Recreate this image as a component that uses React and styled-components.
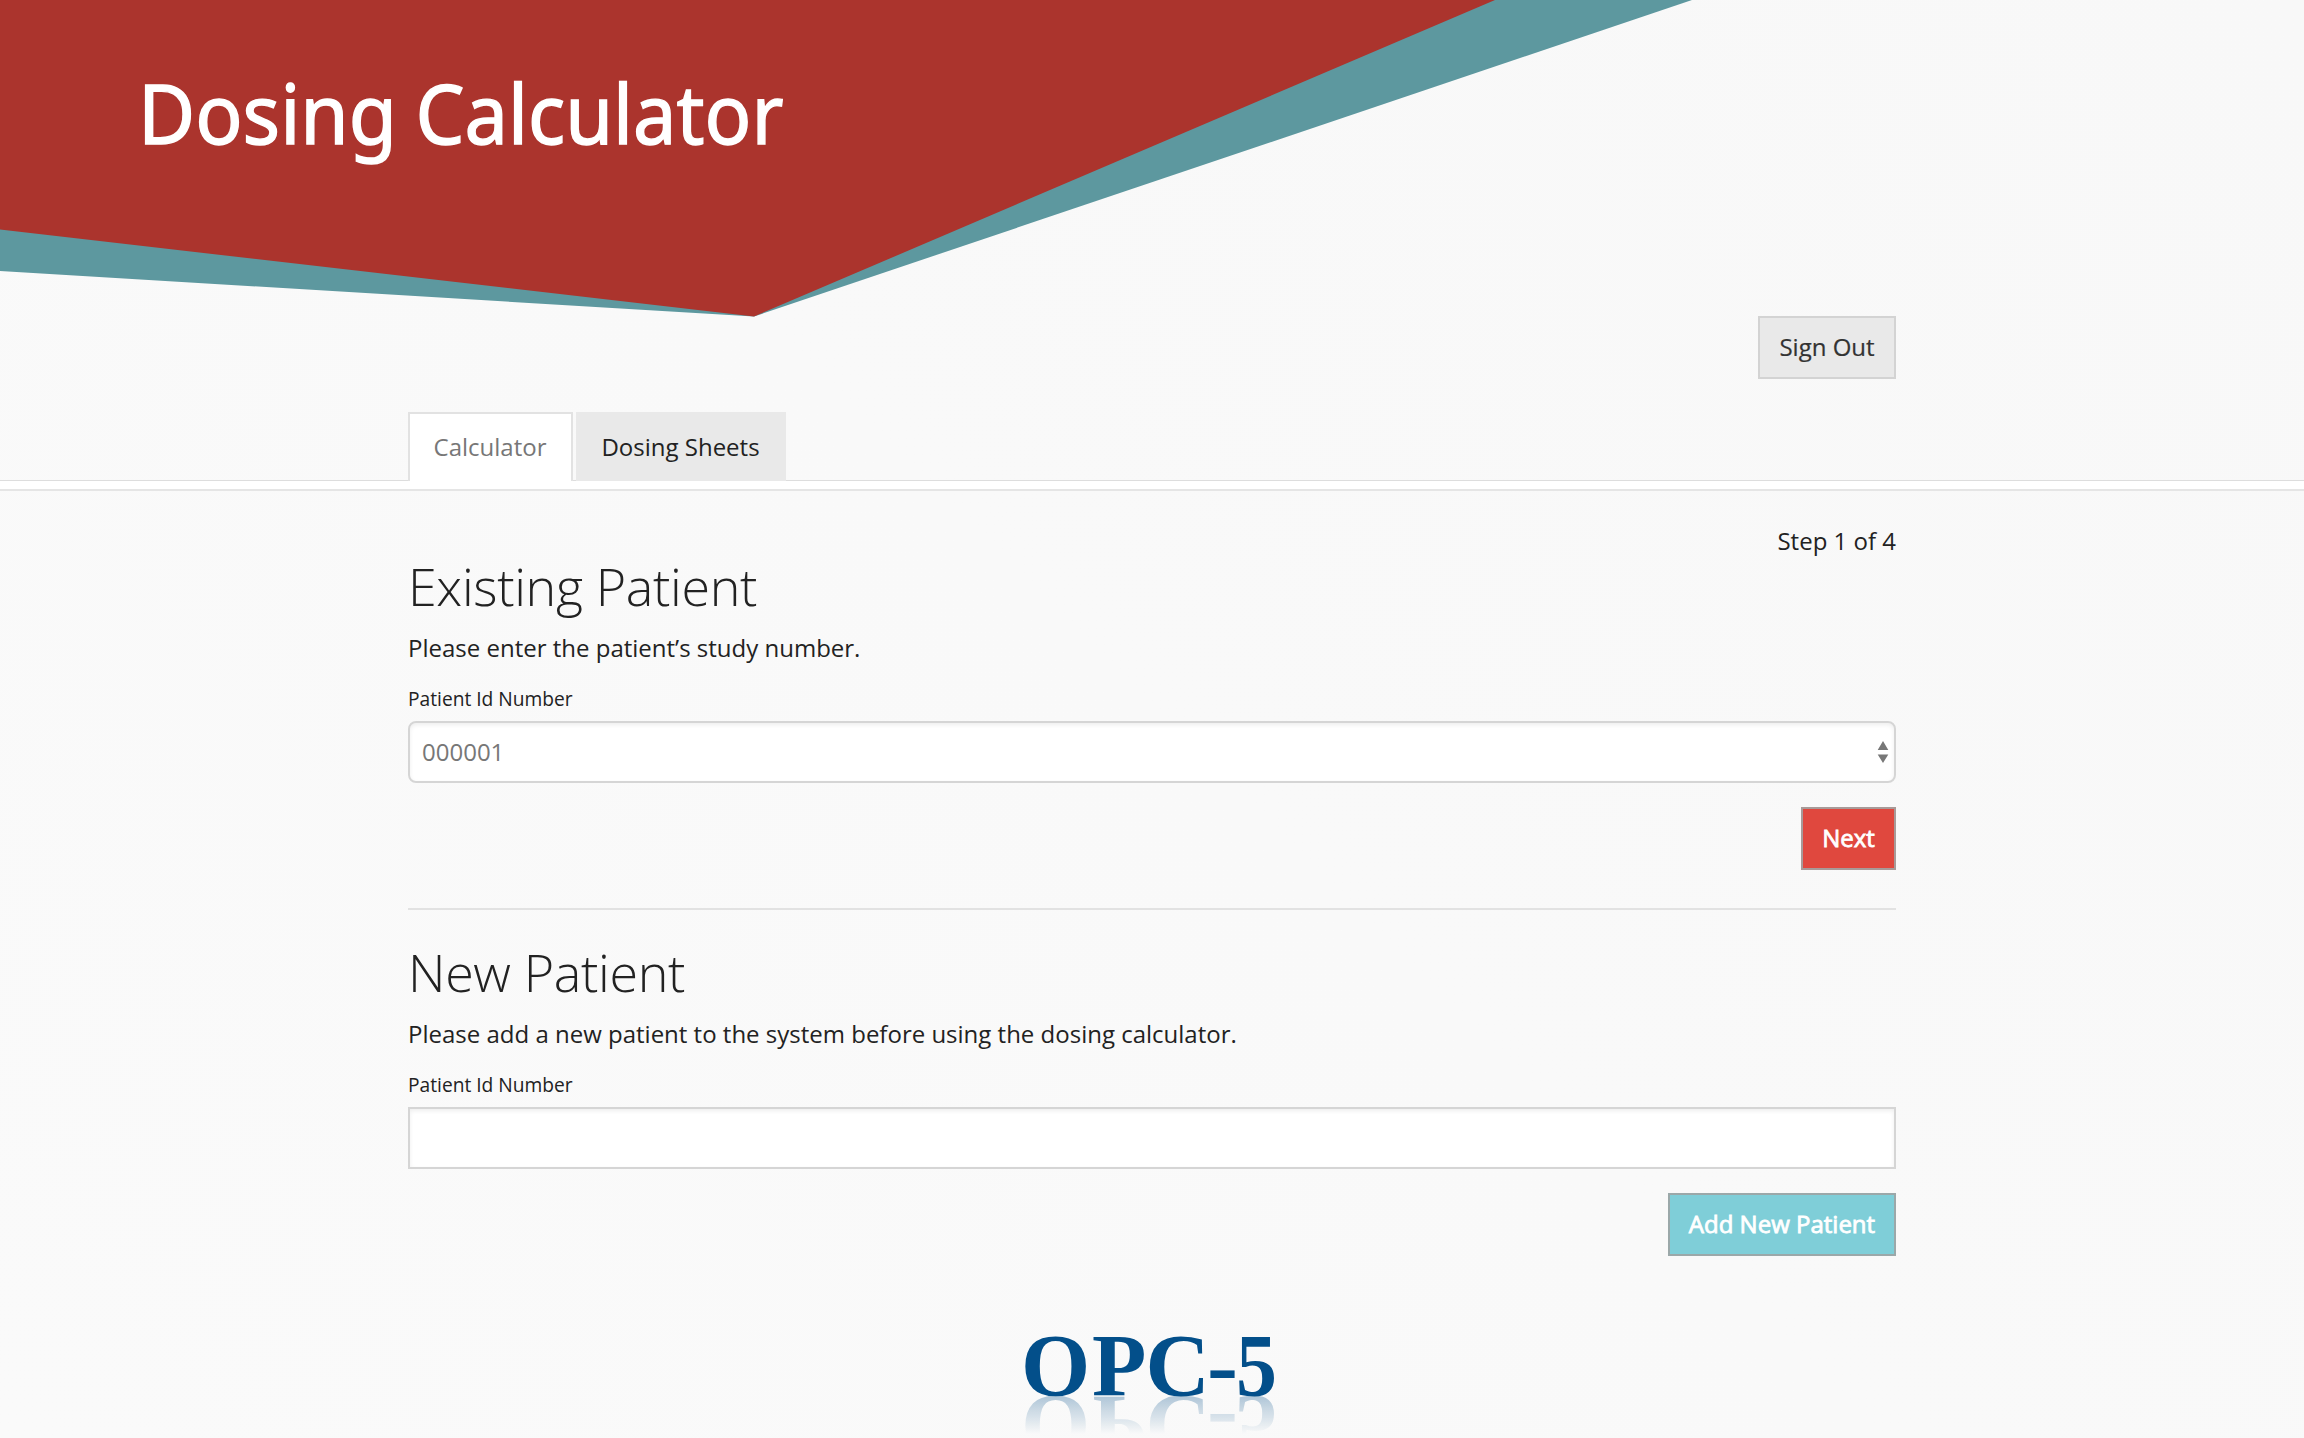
import React from "react";
import styled, { createGlobalStyle } from "styled-components";

const Global = createGlobalStyle`
  * { box-sizing: border-box; }
  html { overflow: hidden; }
  body {
    margin: 0;
    color: #222;
    font-family: "Open Sans", "Noto Sans", sans-serif;
    font-size: 24px;
  }
`;

const Page = styled.div`
  height: 1438px;
  overflow: hidden;
  background: linear-gradient(45deg, #fafafa, #f8f8f8);
`;

const Banner = styled.svg`
  display: block;
  width: 100%;
  height: 317px;
  margin-bottom: -1px;
`;

const Container = styled.div`
  width: 1488px;
  margin: 0 auto;
`;

const Actions = styled.div`
  display: flex;
  justify-content: flex-end;
  margin-top: ${(p) => p.$gap || 0}px;
`;

const tones = {
  plain: { bg: "#e9e9e9", edge: "#d3d3d3", ink: "#333", stroke: 0.2 },
  danger: { bg: "#e0483e", edge: "#a89a98", ink: "#fff", stroke: 0.8 },
  info: { bg: "#7fced8", edge: "#9ba8a9", ink: "#fff", stroke: 0.8 },
};

const Button = styled.button`
  width: ${(p) => p.$width}px;
  height: 63px;
  padding: 0 0 2px;
  border: 2px solid ${(p) => tones[p.$tone].edge};
  border-radius: 0;
  background: ${(p) => tones[p.$tone].bg};
  color: ${(p) => tones[p.$tone].ink};
  -webkit-text-stroke: ${(p) => tones[p.$tone].stroke}px;
  font: inherit;
  white-space: nowrap;
`;

const TabBar = styled.nav`
  margin-top: 33px;
  height: 79px;
  background: linear-gradient(transparent 68px, #ddd 68px, #ddd 69px, #fff 69px);
  border-bottom: 2px solid #e5e5e5;
`;

const TabList = styled(Container)`
  display: flex;
  gap: 3px;
`;

const Tab = styled.a`
  display: flex;
  align-items: center;
  justify-content: center;
  width: ${(p) => p.$width}px;
  height: 69px;
  padding: 0 1px 2px 0;
  background: ${(p) => (p.$active ? "#fff" : "#e9e9e9")};
  border: 2px solid ${(p) => (p.$active ? "#e2e2e2" : "#e9e9e9")};
  border-bottom: 0;
  color: ${(p) => (p.$active ? "#777" : "#222")};
`;

const Step = styled.div`
  padding-top: 32px;
  line-height: 36px;
  text-align: right;
`;

const Section = styled.section`
  padding-top: ${(p) => p.$top}px;
`;

const Heading = styled.h1`
  margin: 0 0 18px;
  font-size: 52px;
  line-height: 52px;
  font-weight: 300;
  letter-spacing: -0.35px;
`;

const Lead = styled.p`
  margin: 0 0 18px;
  line-height: 36px;
`;

const Label = styled.label`
  display: block;
  margin-bottom: 7px;
  font-size: 19.2px;
  line-height: 30px;
`;

const Field = styled.div`
  display: flex;
  align-items: center;
  justify-content: space-between;
  height: 62px;
  padding: 0 5px 0 12px;
  background: #fff;
  border: 2px solid #d5d5d5;
  border-radius: ${(p) => p.$radius || 0}px;
  box-shadow: inset 0 2px 4px rgba(0, 0, 0, 0.07);
  color: #777;
`;

const FieldValue = styled.span`
  padding-bottom: 2px;
`;

const Divider = styled.hr`
  height: 2px;
  margin: 38px 0 0;
  border: 0;
  background: #e2e2e2;
`;

const Logo = styled.svg`
  display: block;
  overflow: visible;
  width: 300px;
  height: 86px;
  margin: 54px 0 0 592px;
  font-family: "Liberation Serif", serif;
  font-size: 89px;
  font-weight: 700;
  fill: #034f8a;
  -webkit-box-reflect: below 0 linear-gradient(transparent 56%, rgba(0, 80, 170, 0.3) 100%);
`;

export default function App() {
  return (
    <Page>
      <Global />
      <Banner viewBox="0 0 2304 317">
        <polygon points="0,0 1692,0 754,316.5 0,271" fill="#5d989f" />
        <polygon points="0,0 1495,0 754,316.5 0,229.5" fill="#ab342d" />
        <g fill="#fff" stroke="#fff" strokeWidth="1.4" fontFamily="Noto Sans" fontSize="83">
          <text x="138" y="143.500" textLength="259" lengthAdjust="spacingAndGlyphs">Dosing</text>
          <text x="415.500" y="143.500" textLength="368" lengthAdjust="spacingAndGlyphs">Calculator</text>
        </g>
      </Banner>
      <Container>
        <Actions>
          <Button $tone="plain" $width={138}>Sign Out</Button>
        </Actions>
      </Container>
      <TabBar>
        <TabList>
          <Tab $active $width={165}>Calculator</Tab>
          <Tab $width={210}>Dosing Sheets</Tab>
        </TabList>
      </TabBar>
      <Container>
        <Step>Step 1 of 4</Step>
        <Section $top={1}>
          <Heading>Existing Patient</Heading>
          <Lead>Please enter the patient’s study number.</Lead>
          <Label>Patient Id Number</Label>
          <Field $radius={8}>
            <FieldValue>000001</FieldValue>
            <svg width="12" height="24" viewBox="0 0 12 24" fill="#777">
              <path d="M6 1 11.3 10H.7zM6 23 11.3 14.500H.7z" />
            </svg>
          </Field>
          <Actions $gap={24}>
            <Button $tone="danger" $width={95}>Next</Button>
          </Actions>
        </Section>
        <Divider />
        <Section $top={36}>
          <Heading>New Patient</Heading>
          <Lead>Please add a new patient to the system before using the dosing calculator.</Lead>
          <Label>Patient Id Number</Label>
          <Field />
          <Actions $gap={24}>
            <Button $tone="info" $width={228}>Add New Patient</Button>
          </Actions>
        </Section>
        <Logo viewBox="0 0 300 86">
          <text x="21 92 145.500" y="85">OPC</text>
          <text x="207" y="85" textLength="31" lengthAdjust="spacingAndGlyphs">-</text>
          <text x="236" y="85" textLength="41" lengthAdjust="spacingAndGlyphs">5</text>
        </Logo>
      </Container>
    </Page>
  );
}
